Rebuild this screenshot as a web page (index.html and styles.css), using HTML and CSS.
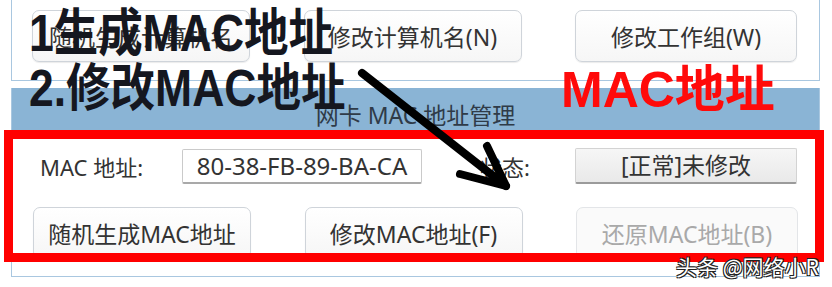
FILE: index.html
```html
<!DOCTYPE html>
<html lang="zh-CN">
  <head>
    <meta charset="utf-8" />
    <title>网卡 MAC 地址管理</title>
    <link rel="stylesheet" href="styles.css">
  </head>
  <body>
    <div class="page">
      <!-- 计算机名 -->
      <div class="panel top-panel">
        <div class="btn-row">
          <button class="btn">随机生成计算机名</button>
          <button class="btn">修改计算机名(N)</button>
          <button class="btn">修改工作组(W)</button>
        </div>
      </div>

      <!-- 网卡 MAC 地址管理 -->
      <div class="panel mac-panel">
        <div class="panel-title">网卡 MAC 地址管理</div>
        <div class="mac-body">
          <div class="field-row">
            <span class="field-label">MAC 地址:</span>
            <div class="mac-input">80-38-FB-89-BA-CA</div>
            <span class="status-label">状态:</span>
            <div class="status-box">[正常]未修改</div>
          </div>
          <div class="btn-row">
            <button class="btn">随机生成MAC地址</button>
            <button class="btn">修改MAC地址(F)</button>
            <button class="btn" disabled>还原MAC地址(B)</button>
          </div>
        </div>
      </div>

      <!-- 标注 -->
      <div class="mark-box"></div>
      <div class="note note-first">1生成MAC地址</div>
      <div class="note note-second">2.修改MAC地址</div>
      <div class="note note-red">MAC地址</div>
      <svg class="arrow" width="832" height="287" viewBox="0 0 832 287">
        <g fill="none" stroke="#000" stroke-width="8" stroke-linecap="round" stroke-linejoin="round">
          <path d="M362 73 L506 186" />
          <path d="M460 174 L506 186 L487 146" />
        </g>
      </svg>
      <div class="watermark">头条 @网络小R</div>
    </div>
  </body>
</html>
```

FILE: styles.css
```css
body {
  margin: 0;
  background: #fff;
}
.page {
  position: relative;
  width: 832px;
  height: 287px;
  overflow: hidden;
  font-family: "Noto Sans", "Noto Sans CJK SC", sans-serif;
  color: #333;
}
.panel {
  box-sizing: border-box;
  width: 809px;
  margin-left: 11px;
  border: 1px solid #a9c7e0;
  border-top: none;
  background: #fff;
}
.top-panel {
  height: 81px;
  padding: 10px 0 0 20px;
}
.mac-panel {
  margin-top: 7px;
}
.btn-row {
  display: grid;
  grid-template-columns: 218px 218px 222px;
  column-gap: 53.5px;
}
.btn {
  height: 52px;
  padding: 0;
  border: 1px solid #cfd4da;
  border-radius: 7px;
  background: linear-gradient(#ffffff, #f6f6f6);
  box-shadow: 0 1px 1px rgba(0, 0, 0, 0.08);
  font-family: inherit;
  font-size: 23px;
  color: #333;
}
.btn:disabled {
  border-color: #e3e5e8;
  background: #fafafa;
  color: #a9a9a9;
  box-shadow: none;
}
.panel-title {
  height: 46px;
  padding-top: 13px;
  box-sizing: border-box;
  background: #8ab4d5;
  text-align: center;
  font-size: 23px;
  line-height: 28px;
  color: #2f3b48;
}
.mac-body {
  padding: 14px 0 17px 21px;
}
.field-row {
  display: flex;
  align-items: center;
  height: 36px;
  margin-bottom: 23px;
  font-size: 22px;
}
.field-label {
  width: 149px;
  padding-left: 7px;
  box-sizing: border-box;
}
.mac-input {
  box-sizing: border-box;
  width: 240px;
  height: 35px;
  border: 1px solid #cacaca;
  border-bottom: 2px solid #a9a9a9;
  border-radius: 2px;
  background: #fff;
  text-align: center;
  font-size: 24px;
  line-height: 31px;
}
.status-label {
  width: 153px;
  padding-right: 45px;
  box-sizing: border-box;
  text-align: right;
}
.status-box {
  box-sizing: border-box;
  width: 222px;
  height: 36px;
  border: 1px solid #d3d3d3;
  border-bottom: 2px solid #9b9b9b;
  border-radius: 2px;
  background: linear-gradient(#f6f6f6, #e9e9e9);
  text-align: center;
  font-size: 23px;
  line-height: 32px;
}
.mark-box {
  position: absolute;
  left: 4px;
  top: 130px;
  width: 820px;
  height: 132px;
  box-sizing: border-box;
  border: 9px solid #ff0000;
}
.note {
  position: absolute;
  font-family: "Liberation Sans", "Noto Sans CJK SC", sans-serif;
  font-weight: bold;
  line-height: 1;
  white-space: nowrap;
  transform-origin: left top;
}
.note-first {
  left: 29px;
  top: 8px;
  font-size: 44.5px;
  color: #15171f;
  transform: scaleY(1.15);
}
.note-second {
  left: 29px;
  top: 63px;
  font-size: 44.5px;
  color: #15171f;
  transform: scaleY(1.15);
}
.note-red {
  left: 561px;
  top: 65px;
  font-size: 50px;
  color: #ff0a0a;
}
.arrow {
  position: absolute;
  left: 0;
  top: 0;
}
.watermark {
  position: absolute;
  left: 676px;
  top: 253px;
  font-family: "Noto Sans CJK SC", sans-serif;
  font-size: 21px;
  line-height: 26px;
  color: #fff;
  text-shadow: -1px -1px 0 #222, 1px -1px 0 #222, -1px 1px 0 #222, 1px 1px 0 #222;
}
```
